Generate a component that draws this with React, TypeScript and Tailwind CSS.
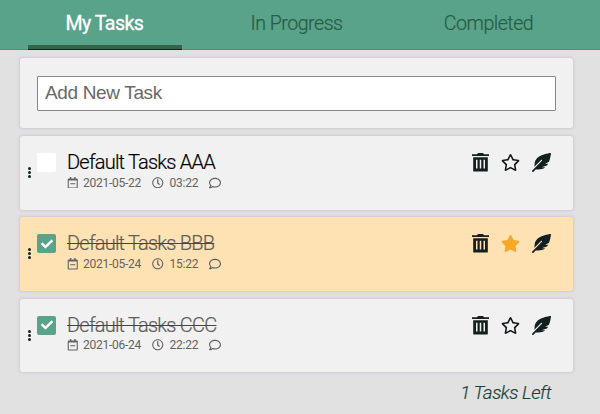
import React from 'react';
import { FaCheck, FaFeatherAlt, FaRegCalendarMinus, FaRegClock, FaRegComment, FaRegStar, FaStar } from 'react-icons/fa';

type Task = { title: string; date: string; time: string; done: boolean; starred: boolean };

const tasks: Task[] = [
  { title: 'Default Tasks AAA', date: '2021-05-22', time: '03:22', done: false, starred: false },
  { title: 'Default Tasks BBB', date: '2021-05-24', time: '15:22', done: true, starred: true },
  { title: 'Default Tasks CCC', date: '2021-06-24', time: '22:22', done: true, starred: false },
];

const tabs = ['My Tasks', 'In Progress', 'Completed'];

function TrashIcon() {
  return (
    <svg width="17" height="19" viewBox="0 0 17 19" fill="#141f22">
      <path d="M6 0h5l1 1.200h5V3H0V1.200h5z" />
      <path fillRule="evenodd" d="M1.200 4.200h14.600V18q0 .4-.4.4H1.600q-.4 0-.4-.4zM4 6.800v8.700h1.500V6.800zM7.750 6.800v8.700h1.500V6.800zM11.500 6.800v8.700H13V6.800z" />
    </svg>
  );
}

function TaskCard({ task }: { task: Task }) {
  return (
    <li
      className={`flex h-[73.500px] rounded-[3px] pl-[7px] shadow-[0_0_3px_1px_#d3c8d8] ${task.starred ? 'bg-[#ffe2b4]' : 'bg-[#f1f1f1]'}`}
    >
      <div className="flex w-[5px] flex-col items-center gap-px pt-[31px]">
        <i className="size-[3px] rounded-full bg-[#14231f]" />
        <i className="size-[3px] rounded-full bg-[#14231f]" />
        <i className="size-[3px] rounded-full bg-[#14231f]" />
      </div>
      <div
        className={`mt-[17px] ml-[5px] flex size-[19px] items-center justify-center rounded-[2px] ${task.done ? 'bg-[#5aa38b]' : 'bg-white'}`}
      >
        {task.done && <FaCheck size={12} color="white" />}
      </div>
      <div className="ml-[11px] pt-[14px]">
        <h2
          className={`text-[20px] leading-[24px] font-light tracking-[-0.78px] whitespace-nowrap [-webkit-text-stroke:0.2px] ${task.done ? 'text-[#5e5d59] line-through decoration-[#45443f] decoration-1' : 'text-black'}`}
        >
          {task.title}
        </h2>
        <div className="flex h-[17px] items-center text-[12px] tracking-[-0.25px] whitespace-nowrap text-[#626262]">
          <FaRegCalendarMinus size={11.500} className="shrink-0" />
          <span className="ml-[4.500px] w-[59px]">{task.date}</span>
          <FaRegClock size={11.500} className="ml-[10px] shrink-0" />
          <span className="ml-[6px] w-[29px]">{task.time}</span>
          <FaRegComment size={12} className="ml-[10px] shrink-0" />
        </div>
      </div>
      <div className="mt-[17px] mr-[22.500px] ml-auto flex h-[19px] items-center">
        <TrashIcon />
        {task.starred ? (
          <FaStar size={19} color="#f7a827" className="ml-[12px]" />
        ) : (
          <FaRegStar size={19} color="#10191c" className="ml-[12px]" />
        )}
        <FaFeatherAlt size={19} color="#141f22" className="ml-[12px]" />
      </div>
    </li>
  );
}

export default function App() {
  return (
    <div className="h-[414px] w-[600px] overflow-hidden bg-[#e1e1e1] font-['Roboto','Liberation_Sans',sans-serif]">
      <header className="h-[50px] border-b border-[#3f9777] bg-[#5aa38b]">
        <nav className="ml-[8.500px] flex w-[576px]">
          {tabs.map((tab, i) => (
            <button
              key={tab}
              className={`flex h-[50px] w-[192px] flex-col items-center pt-[11px] text-[19.600px] leading-[25px] ${i === 0 ? 'tracking-[-0.55px] text-white [-webkit-text-stroke:0.3px]' : 'font-light tracking-[-0.5px] text-[#285c43] [-webkit-text-stroke:0.2px]'}`}
            >
              {tab}
              {i === 0 && <span className="mt-[9px] h-[5px] w-[154px] border-b border-[#092817] bg-[#356547]" />}
            </button>
          ))}
        </nav>
      </header>
      <main className="mr-[27px] ml-5 pt-2">
        <div className="mb-2 flex h-[70px] items-center rounded-[3px] bg-[#f1f1f1] px-[17px] shadow-[0_0_3px_1px_#d3c8d8]">
          <input
            placeholder="Add New Task"
            className="h-[35px] w-full rounded-[1px] border border-[#888] bg-white px-[7px] font-['Liberation_Sans',sans-serif] text-[19px] tracking-[-0.35px] placeholder:text-[#686868]"
          />
        </div>
        <ul className="flex flex-col gap-[7.800px]">
          {tasks.map((task) => (
            <TaskCard key={task.title} task={task} />
          ))}
        </ul>
        <p className="mt-[9px] mr-[22px] text-right text-[18.800px] leading-[25px] font-light tracking-[-0.5px] text-[#203f32] italic [-webkit-text-stroke:0.2px]">
          1 Tasks Left
        </p>
      </main>
    </div>
  );
}
